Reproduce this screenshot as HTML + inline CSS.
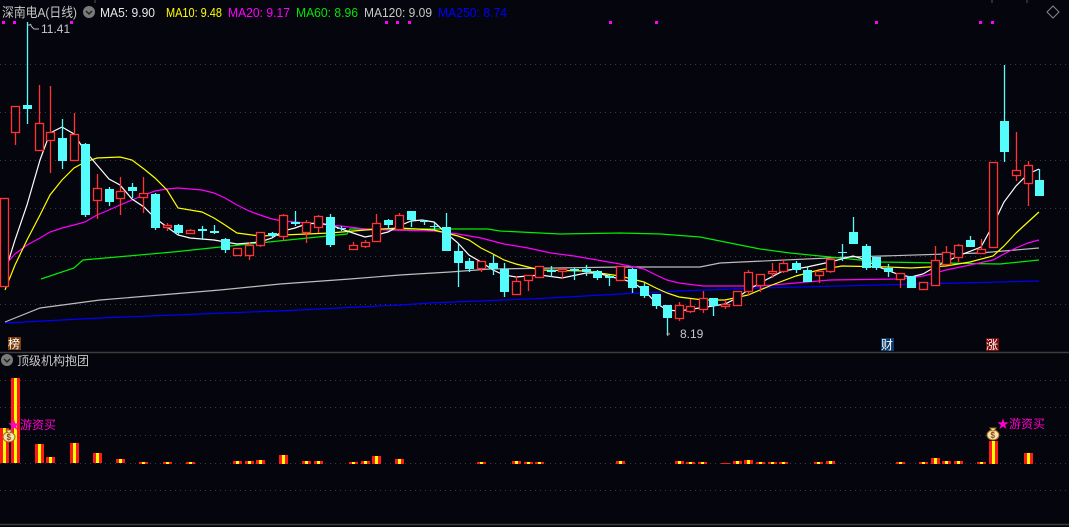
<!DOCTYPE html>
<html><head><meta charset="utf-8"><style>
html,body{margin:0;padding:0;background:#05050d;}
body{width:1069px;height:527px;overflow:hidden;position:relative;font-family:"Liberation Sans","Noto Sans CJK SC",sans-serif;}
svg{position:absolute;left:0;top:0;}
</style></head><body>
<svg width="1069" height="527" viewBox="0 0 1069 527" xmlns="http://www.w3.org/2000/svg" font-family="Liberation Sans, Noto Sans CJK SC, sans-serif">
<rect width="1069" height="527" fill="#05050d"/>
<g stroke="#3a3a3a" stroke-dasharray="1 4" stroke-width="1">
<path d="M0 64.5H1069M0 112.5H1069M0 160.5H1069M0 208.5H1069M0 256.5H1069M0 304.5H1069"/>
<path d="M0 380.5H1069M0 407.5H1069M0 435.5H1069M0 463.5H1069M0 490.5H1069"/>
</g>
<path d="M0 352.5H1069M0 524.5H1069" stroke="#3c3c3c" stroke-width="1.5"/>
<path d="M95 0V3M992 0V3M1027 0V3" stroke="#555"/>
<text x="2" y="17" font-size="13" fill="#c8c8c8" textLength="75" lengthAdjust="spacingAndGlyphs">深南电A(日线)</text>
<circle cx="89" cy="12" r="6" fill="#7a7a7a"/><path d="M86 11l3 3 3-3" stroke="#222" stroke-width="1.5" fill="none"/>
<g font-size="13">
<text x="100" y="17" fill="#e8e8e8" textLength="55" lengthAdjust="spacingAndGlyphs">MA5: 9.90</text>
<text x="166" y="17" fill="#ffff00" textLength="56" lengthAdjust="spacingAndGlyphs">MA10: 9.48</text>
<text x="228" y="17" fill="#ff00ff" textLength="62" lengthAdjust="spacingAndGlyphs">MA20: 9.17</text>
<text x="296" y="17" fill="#00e600" textLength="62" lengthAdjust="spacingAndGlyphs">MA60: 8.96</text>
<text x="364" y="17" fill="#c8c8c8" textLength="68" lengthAdjust="spacingAndGlyphs">MA120: 9.09</text>
<text x="438" y="17" fill="#0000ff" textLength="69" lengthAdjust="spacingAndGlyphs">MA250: 8.74</text>
</g>
<path d="M1053 6l6 6-6 6-6-6z" fill="none" stroke="#888"/>
<g fill="#ff00ff"><rect x="2" y="21" width="3" height="3"/><rect x="13" y="21" width="3" height="3"/><rect x="70" y="21" width="3" height="3"/><rect x="385" y="21" width="3" height="3"/><rect x="396" y="21" width="3" height="3"/><rect x="408" y="21" width="3" height="3"/><rect x="609" y="21" width="3" height="3"/><rect x="655" y="21" width="3" height="3"/><rect x="875" y="21" width="3" height="3"/><rect x="979" y="21" width="3" height="3"/><rect x="991" y="21" width="3" height="3"/></g>
<g fill="none" stroke-width="1.2">
<polyline stroke="#0000ff" points="5,323 100,318 200,314 300,310 400,305 430,303 480,301 550,298 620,294 680,291 760,288 880,285 960,283 1039,281"/>
<polyline stroke="#bdbdbd" points="5,322 40,308 100,300 160,295 220,290 280,284 350,279 400,275 450,272 490,269 620,267 700,267 720,263 850,257 980,253 1039,248"/>
<polyline stroke="#00ee00" points="41,279 74,268 83,260 173,252 230,246 347,234 350,229 488,229 500,231 560,234 620,233 661,234 700,237 720,241 760,249 790,253 830,257 880,262 940,263 1000,264 1039,260"/>
<polyline stroke="#ff00ff" points="5,265 15,254 27,245 40,238 50,232 62,228 74,225 85,222 97,215 109,210 120,205 132,200 144,195 155,191 167,189 178,188 190,189 202,190 214,193 225,198 237,205 249,211 260,215 272,219 283,221 295,222 318,224 341,226 365,229 388,230 434,231 458,234 481,238 504,244 528,248 551,253 574,256 597,260 620,264 644,269 656,275 667,280 679,283 703,286 760,286 796,283 830,280 900,279 923,276 935,273 946,270 970,265 993,260 1004,254 1016,248 1028,243 1039,240"/>
<polyline stroke="#ffff00" points="5,290 15,265 27,240 40,215 50,195 62,180 74,168 85,162 97,158 120,157 132,160 144,169 155,178 167,190 178,208 202,212 214,218 225,225 237,233 260,236 330,233 365,230 399,228 434,230 446,233 458,236 469,240 481,248 493,254 504,260 516,264 540,270 586,271 620,276 644,282 656,288 667,293 679,297 703,300 725,300 748,295 772,285 796,276 819,270 842,266 888,267 911,268 946,266 970,262 993,256 1004,246 1016,233 1028,222 1039,212"/>
<polyline stroke="#ffffff" points="5,272 15,240 27,205 40,160 50,133 62,127 74,134 85,151 97,165 109,179 120,185 132,199 144,207 155,218 167,227 178,235 190,238 214,240 237,244 260,242 272,238 283,231 295,228 306,224 318,223 330,225 353,233 365,237 376,235 388,232 399,226 411,221 422,220 434,222 446,233 458,243 469,255 481,262 493,270 504,275 516,277 540,275 562,278 586,273 597,273 620,279 632,282 644,290 656,303 667,310 679,311 713,306 725,304 737,298 748,290 760,283 783,271 807,267 830,262 853,256 866,260 876,266 900,275 911,277 923,274 935,267 958,256 981,247 993,225 1004,202 1016,186 1028,174 1039,169"/>
</g>
<path stroke="#ff3333" stroke-width="1.3" fill="none" d="M4.5 198V287M15.5 106V145M39.5 85V150M50.5 86V173M74.5 113V160M97.5 174V219M120.5 177V215M143.5 177V213M167.5 223V231M190.5 229V234M237.5 248V256M249.5 242V260M260.5 232V247M283.5 214V241M306.5 220V243M318.5 215V233M353.5 242V250M365.5 240V248M376.5 214V241M399.5 213V229M481.5 261V272M516.5 276V294M528.5 275V291M539.5 266V277M562.5 269V279M620.5 266V280M679.5 302V321M690.5 299V313M703.5 291V313M725.5 300V309M737.5 291V305M748.5 270V295M760.5 274V292M772.5 263V278M783.5 259V273M819.5 270V283M830.5 258V273M900.5 273V288M923.5 282V290M935.5 246V285M946.5 246V264M958.5 244V262M981.5 239V253M993.5 162V247M1016.5 132V181M1028.5 161V206"/>
<path stroke="#54fcfc" stroke-width="1.3" fill="none" d="M27.5 22V124M62.5 119V169M85.5 143V217M109.5 187V206M132.5 183V198M155.5 193V230M178.5 224V235M202.5 226V240M214.5 225V234M225.5 238V253M272.5 232V237M295.5 211V226M330.5 214V247M341.5 226V231M388.5 219V229M411.5 211V227M424.5 220V225M434.5 223V230M446.5 213V251M458.5 244V287M469.5 258V272M493.5 255V275M504.5 263V297M551.5 266V277M574.5 268V280M586.5 265V276M597.5 270V280M609.5 275V286M632.5 268V293M644.5 283V298M656.5 294V309M667.5 305V334M713.5 298V316M796.5 261V273M807.5 267V282M842.5 244V261M853.5 217V244M866.5 244V270M876.5 257V270M888.5 264V277M911.5 276V288M970.5 236V247M1004.5 65V162M1039.5 169V196"/>
<g fill="#05050d" stroke="#ff3333" stroke-width="1.3">
<rect x="0.5" y="198.5" width="8" height="88"/><rect x="11.5" y="106.5" width="8" height="26"/><rect x="35.5" y="123.5" width="8" height="27"/><rect x="46.5" y="132.5" width="8" height="8"/><rect x="70.5" y="134.5" width="8" height="26"/><rect x="93.5" y="188.5" width="8" height="12"/><rect x="116.5" y="191.5" width="8" height="7"/><rect x="139.5" y="193.5" width="8" height="4"/><rect x="163.5" y="225.5" width="8" height="2"/><rect x="186.5" y="230.5" width="8" height="3"/><rect x="233.5" y="248.5" width="8" height="7"/><rect x="245.5" y="245.5" width="8" height="10"/><rect x="256.5" y="232.5" width="8" height="13"/><rect x="279.5" y="215.5" width="8" height="21"/><rect x="302.5" y="222.5" width="8" height="10"/><rect x="314.5" y="216.5" width="8" height="11"/><rect x="349.5" y="245.5" width="8" height="4"/><rect x="361.5" y="242.5" width="8" height="4"/><rect x="372.5" y="223.5" width="8" height="18"/><rect x="395.5" y="215.5" width="8" height="14"/><rect x="477.5" y="261.5" width="8" height="7"/><rect x="512.5" y="281.5" width="8" height="13"/><rect x="524.5" y="275.5" width="8" height="5"/><rect x="535.5" y="266.5" width="8" height="11"/><rect x="558.5" y="269.5" width="8" height="2"/><rect x="616.5" y="266.5" width="8" height="14"/><rect x="675.5" y="305.5" width="8" height="13"/><rect x="686.5" y="306.5" width="8" height="5"/><rect x="699.5" y="298.5" width="8" height="11"/><rect x="721.5" y="304.5" width="8" height="2"/><rect x="733.5" y="291.5" width="8" height="14"/><rect x="744.5" y="272.5" width="8" height="19"/><rect x="756.5" y="274.5" width="8" height="11"/><rect x="768.5" y="271.5" width="8" height="2"/><rect x="779.5" y="263.5" width="8" height="8"/><rect x="815.5" y="271.5" width="8" height="4"/><rect x="826.5" y="259.5" width="8" height="12"/><rect x="896.5" y="273.5" width="8" height="6"/><rect x="919.5" y="282.5" width="8" height="7"/><rect x="931.5" y="260.5" width="8" height="25"/><rect x="942.5" y="252.5" width="8" height="12"/><rect x="954.5" y="245.5" width="8" height="12"/><rect x="977.5" y="249.5" width="8" height="4"/><rect x="989.5" y="162.5" width="8" height="85"/><rect x="1012.5" y="170.5" width="8" height="5"/><rect x="1024.5" y="165.5" width="8" height="18"/>
</g>
<g fill="#54fcfc">
<rect x="23" y="105" width="9" height="4"/><rect x="58" y="138" width="9" height="23"/><rect x="81" y="144" width="9" height="71"/><rect x="105" y="189" width="9" height="13"/><rect x="128" y="187" width="9" height="4"/><rect x="151" y="194" width="9" height="34"/><rect x="174" y="225" width="9" height="8"/><rect x="198" y="229" width="9" height="2"/><rect x="210" y="231" width="9" height="2"/><rect x="221" y="239" width="9" height="11"/><rect x="268" y="233" width="9" height="3"/><rect x="291" y="222" width="9" height="2"/><rect x="326" y="217" width="9" height="28"/><rect x="337" y="228" width="9" height="1"/><rect x="384" y="220" width="9" height="5"/><rect x="407" y="211" width="9" height="9"/><rect x="420" y="221" width="9" height="1"/><rect x="430" y="226" width="9" height="1"/><rect x="442" y="227" width="9" height="24"/><rect x="454" y="251" width="9" height="12"/><rect x="465" y="261" width="9" height="8"/><rect x="489" y="263" width="9" height="6"/><rect x="500" y="269" width="9" height="23"/><rect x="547" y="270" width="9" height="2"/><rect x="570" y="269" width="9" height="2"/><rect x="582" y="269" width="9" height="3"/><rect x="593" y="271" width="9" height="7"/><rect x="605" y="276" width="9" height="2"/><rect x="628" y="269" width="9" height="19"/><rect x="640" y="286" width="9" height="10"/><rect x="652" y="294" width="9" height="12"/><rect x="663" y="305" width="9" height="13"/><rect x="709" y="298" width="9" height="8"/><rect x="792" y="263" width="9" height="7"/><rect x="803" y="270" width="9" height="12"/><rect x="838" y="252" width="9" height="1"/><rect x="849" y="232" width="9" height="12"/><rect x="862" y="246" width="9" height="22"/><rect x="872" y="257" width="9" height="11"/><rect x="884" y="268" width="9" height="4"/><rect x="907" y="276" width="9" height="12"/><rect x="966" y="240" width="9" height="7"/><rect x="1000" y="121" width="9" height="31"/><rect x="1035" y="180" width="9" height="16"/>
</g>
<path d="M28 25h3l-1-1M31 26l3 3h5" stroke="#bbb" fill="none"/>
<text x="41" y="33" font-size="12" fill="#c8c8c8">11.41</text>
<path d="M667 334h3M668 332l-1 2 1 2" stroke="#bbb" fill="none"/>
<text x="680" y="338" font-size="12" fill="#c8c8c8">8.19</text>
<rect x="8" y="337" width="13" height="13" fill="#7a3b0a"/><text x="8" y="348" font-size="12" fill="#fff">榜</text>
<rect x="881" y="338" width="13" height="13" fill="#0a3a6a"/><text x="881" y="349" font-size="12" fill="#fff">财</text>
<rect x="986" y="338" width="13" height="13" fill="#7a0a0a"/><text x="986" y="349" font-size="12" fill="#fff">涨</text>
<circle cx="7" cy="360" r="6" fill="#7a7a7a"/><path d="M4 359l3 3 3-3" stroke="#222" stroke-width="1.5" fill="none"/>
<text x="17" y="365" font-size="12" fill="#c8c8c8">顶级机构抱团</text>
<g>
<rect x="0" y="428" width="9" height="35" fill="#ff1a1a"/><rect x="3" y="428" width="3" height="35" fill="#ffff00"/>
<rect x="11" y="378" width="9" height="85" fill="#ff1a1a"/><rect x="14" y="378" width="3" height="85" fill="#ffff00"/>
<rect x="35" y="444" width="9" height="19" fill="#ff1a1a"/><rect x="38" y="444" width="3" height="19" fill="#ffff00"/>
<rect x="46" y="457" width="9" height="6" fill="#ff1a1a"/><rect x="49" y="457" width="3" height="6" fill="#ffff00"/>
<rect x="70" y="443" width="9" height="20" fill="#ff1a1a"/><rect x="73" y="443" width="3" height="20" fill="#ffff00"/>
<rect x="93" y="453" width="9" height="10" fill="#ff1a1a"/><rect x="96" y="453" width="3" height="10" fill="#ffff00"/>
<rect x="116" y="459" width="9" height="4" fill="#ff1a1a"/><rect x="119" y="459" width="3" height="4" fill="#ffff00"/>
<rect x="139" y="462" width="9" height="2" fill="#ff1a1a"/><rect x="142" y="462" width="3" height="2" fill="#ffff00"/>
<rect x="163" y="462" width="9" height="2" fill="#ff1a1a"/><rect x="166" y="462" width="3" height="2" fill="#ffff00"/>
<rect x="186" y="462" width="9" height="2" fill="#ff1a1a"/><rect x="189" y="462" width="3" height="2" fill="#ffff00"/>
<rect x="233" y="461" width="9" height="3" fill="#ff1a1a"/><rect x="236" y="461" width="3" height="3" fill="#ffff00"/>
<rect x="245" y="461" width="9" height="3" fill="#ff1a1a"/><rect x="248" y="461" width="3" height="3" fill="#ffff00"/>
<rect x="256" y="460" width="9" height="4" fill="#ff1a1a"/><rect x="259" y="460" width="3" height="4" fill="#ffff00"/>
<rect x="279" y="455" width="9" height="9" fill="#ff1a1a"/><rect x="282" y="455" width="3" height="9" fill="#ffff00"/>
<rect x="302" y="461" width="9" height="3" fill="#ff1a1a"/><rect x="305" y="461" width="3" height="3" fill="#ffff00"/>
<rect x="314" y="461" width="9" height="3" fill="#ff1a1a"/><rect x="317" y="461" width="3" height="3" fill="#ffff00"/>
<rect x="349" y="462" width="9" height="2" fill="#ff1a1a"/><rect x="352" y="462" width="3" height="2" fill="#ffff00"/>
<rect x="361" y="461" width="9" height="3" fill="#ff1a1a"/><rect x="364" y="461" width="3" height="3" fill="#ffff00"/>
<rect x="372" y="456" width="9" height="8" fill="#ff1a1a"/><rect x="375" y="456" width="3" height="8" fill="#ffff00"/>
<rect x="395" y="459" width="9" height="5" fill="#ff1a1a"/><rect x="398" y="459" width="3" height="5" fill="#ffff00"/>
<rect x="477" y="462" width="9" height="2" fill="#ff1a1a"/><rect x="480" y="462" width="3" height="2" fill="#ffff00"/>
<rect x="512" y="461" width="9" height="3" fill="#ff1a1a"/><rect x="515" y="461" width="3" height="3" fill="#ffff00"/>
<rect x="524" y="462" width="9" height="2" fill="#ff1a1a"/><rect x="527" y="462" width="3" height="2" fill="#ffff00"/>
<rect x="535" y="462" width="9" height="2" fill="#ff1a1a"/><rect x="538" y="462" width="3" height="2" fill="#ffff00"/>
<rect x="616" y="461" width="9" height="3" fill="#ff1a1a"/><rect x="619" y="461" width="3" height="3" fill="#ffff00"/>
<rect x="675" y="461" width="9" height="3" fill="#ff1a1a"/><rect x="678" y="461" width="3" height="3" fill="#ffff00"/>
<rect x="686" y="462" width="9" height="2" fill="#ff1a1a"/><rect x="689" y="462" width="3" height="2" fill="#ffff00"/>
<rect x="698" y="462" width="9" height="2" fill="#ff1a1a"/><rect x="701" y="462" width="3" height="2" fill="#ffff00"/>
<rect x="721" y="463" width="9" height="1" fill="#ff1a1a"/>
<rect x="733" y="461" width="9" height="3" fill="#ff1a1a"/><rect x="736" y="461" width="3" height="3" fill="#ffff00"/>
<rect x="744" y="460" width="9" height="4" fill="#ff1a1a"/><rect x="747" y="460" width="3" height="4" fill="#ffff00"/>
<rect x="756" y="462" width="9" height="2" fill="#ff1a1a"/><rect x="759" y="462" width="3" height="2" fill="#ffff00"/>
<rect x="768" y="462" width="9" height="2" fill="#ff1a1a"/><rect x="771" y="462" width="3" height="2" fill="#ffff00"/>
<rect x="779" y="462" width="9" height="2" fill="#ff1a1a"/><rect x="782" y="462" width="3" height="2" fill="#ffff00"/>
<rect x="814" y="462" width="9" height="2" fill="#ff1a1a"/><rect x="817" y="462" width="3" height="2" fill="#ffff00"/>
<rect x="826" y="461" width="9" height="3" fill="#ff1a1a"/><rect x="829" y="461" width="3" height="3" fill="#ffff00"/>
<rect x="896" y="462" width="9" height="2" fill="#ff1a1a"/><rect x="899" y="462" width="3" height="2" fill="#ffff00"/>
<rect x="919" y="462" width="9" height="2" fill="#ff1a1a"/><rect x="922" y="462" width="3" height="2" fill="#ffff00"/>
<rect x="931" y="458" width="9" height="6" fill="#ff1a1a"/><rect x="934" y="458" width="3" height="6" fill="#ffff00"/>
<rect x="942" y="461" width="9" height="3" fill="#ff1a1a"/><rect x="945" y="461" width="3" height="3" fill="#ffff00"/>
<rect x="954" y="461" width="9" height="3" fill="#ff1a1a"/><rect x="957" y="461" width="3" height="3" fill="#ffff00"/>
<rect x="977" y="462" width="9" height="2" fill="#ff1a1a"/><rect x="980" y="462" width="3" height="2" fill="#ffff00"/>
<rect x="989" y="441" width="9" height="23" fill="#ff1a1a"/><rect x="992" y="441" width="3" height="23" fill="#ffff00"/>
<rect x="1024" y="453" width="9" height="11" fill="#ff1a1a"/><rect x="1027" y="453" width="3" height="11" fill="#ffff00"/>
</g>
<g>
<ellipse cx="9" cy="437" rx="6" ry="5" fill="#f5e2a8" stroke="#a06a20"/><path d="M6 430h6l-2 3h-2z" fill="#f5e2a8" stroke="#a06a20"/>
<text x="6.5" y="440" font-size="8" fill="#8a4a10" font-weight="bold">$</text>
<ellipse cx="993" cy="435" rx="6" ry="5" fill="#f5e2a8" stroke="#a06a20"/><path d="M990 428h6l-2 3h-2z" fill="#f5e2a8" stroke="#a06a20"/>
<text x="990.5" y="438" font-size="8" fill="#8a4a10" font-weight="bold">$</text>
</g>
<text x="8" y="429" font-size="12" fill="#ff00cc">★游资买</text>
<text x="997" y="428" font-size="12" fill="#ff00cc">★游资买</text>
</svg>
</body></html>
